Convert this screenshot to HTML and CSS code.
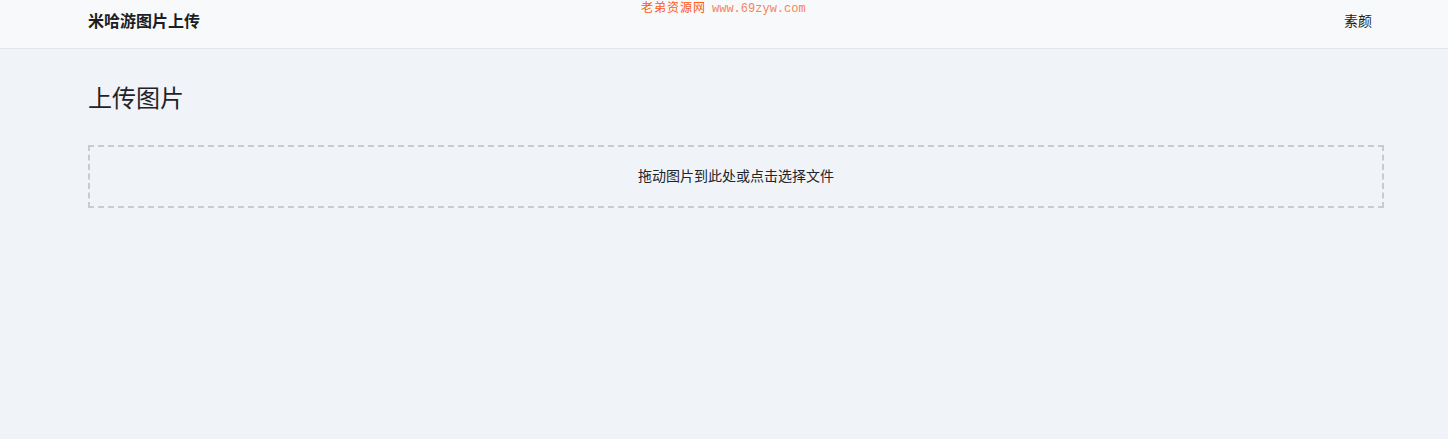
FILE: index.html
```html
<!DOCTYPE html>
<html lang="zh-CN">
<head>
    <meta charset="UTF-8">
    <meta name="viewport" content="width=device-width, initial-scale=1.0">
    <title>米哈游图片上传</title>
    <link rel="stylesheet" href="styles.css">
</head>
<body>
    <div class="watermark"><span class="wm-name">老弟资源网</span><span class="wm-url">www.69zyw.com</span></div>

    <header class="topbar">
        <div class="container topbar-inner">
            <div class="brand">米哈游图片上传</div>
            <div class="user">素颜</div>
        </div>
    </header>

    <main class="container">
        <h1 class="page-title">上传图片</h1>
        <div class="dropzone" id="dropzone">拖动图片到此处或点击选择文件</div>
    </main>
</body>
</html>
```

FILE: styles.css
```css
* {
    box-sizing: border-box;
}
body {
    margin: 0;
    font-family: "Noto Sans CJK SC", "Noto Sans", sans-serif;
    background: #f0f3f8;
    color: #212529;
    position: relative;
}
.container {
    width: 1296px;
    margin-left: 88px;
}
.watermark {
    position: absolute;
    top: 0;
    left: 641px;
    font-size: 12px;
    line-height: 14px;
    white-space: nowrap;
}
.wm-name {
    color: #ff5a14;
    letter-spacing: 1px;
    margin-right: 6px;
}
.wm-url {
    font-family: "Liberation Mono", monospace;
    color: #f4845c;
}
.topbar {
    height: 49px;
    background: #f8f9fb;
    border-bottom: 1px solid #e3e6ea;
}
.topbar-inner {
    display: flex;
    justify-content: space-between;
    align-items: center;
    height: 48px;
    padding-right: 12px;
    padding-bottom: 8px;
}
.brand {
    font-size: 16px;
    font-weight: bold;
    color: #1b1f24;
}
.user {
    font-size: 14px;
    color: #1b1f24;
}
.page-title {
    margin: 0;
    padding-top: 31px;
    font-size: 24px;
    font-weight: normal;
    line-height: 34px;
    color: #1f2329;
}
.dropzone {
    margin-top: 31px;
    height: 63px;
    padding-bottom: 3px;
    border: 2px dashed #c9cbcd;
    display: flex;
    justify-content: center;
    align-items: center;
    font-size: 14px;
    color: #212529;
    cursor: pointer;
}
```
